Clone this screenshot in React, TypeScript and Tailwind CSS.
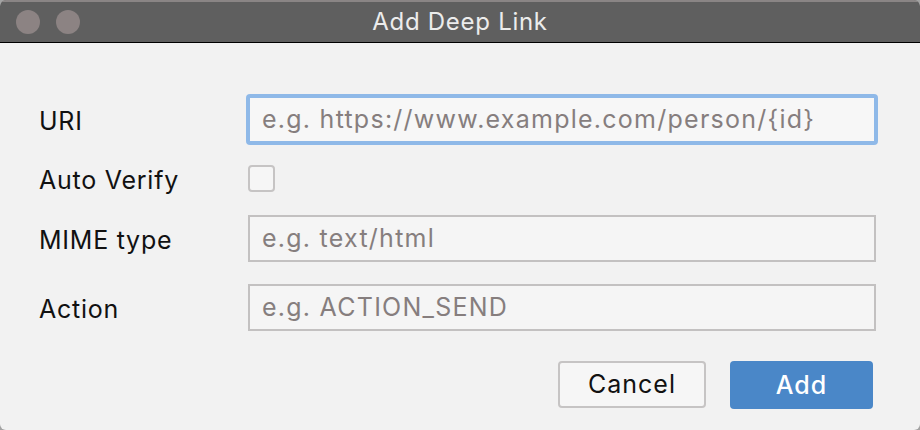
import React from 'react';

const font = { fontFamily: 'Inter, "Liberation Sans", sans-serif' };

function Field({ placeholder, focused }: { placeholder: string; focused?: boolean }) {
  return (
    <div
      className={
        focused
          ? 'h-[47px] w-[628px] rounded-[2px] border-2 border-[#8fb9e8] bg-[#f7f7f7] shadow-[0_0_0_2px_#8fb9e8] flex items-center px-[12px]'
          : 'h-[47px] w-[628px] border-2 border-[#c3c1c1] bg-[#f5f5f5] flex items-center px-[12px]'
      }
    >
      <span className="text-[25px] leading-none text-[#867e7e] tracking-[0.05em]">{placeholder}</span>
    </div>
  );
}

function Label({ children }: { children: React.ReactNode }) {
  return <span className="pt-[4px] text-[25px] leading-none text-[#111] tracking-[0.03em]">{children}</span>;
}

export default function App() {
  return (
    <div className="w-[920px] h-[430px] bg-[#a3a3a3]" style={font}>
      <div className="w-full h-full rounded-[6px] overflow-hidden bg-[#f2f2f2] flex flex-col">
        {/* title bar */}
        <div className="h-[43px] bg-[#5f5f5f] border-t-2 border-[#8a8585] border-b border-b-black relative flex items-center justify-center">
          <div className="absolute left-[16px] top-[8px] flex gap-[16px]">
            <div className="w-[24px] h-[24px] rounded-full bg-[#8c8383]" />
            <div className="w-[24px] h-[24px] rounded-full bg-[#8c8383]" />
          </div>
          <span className="text-[24px] text-[#ececec] tracking-[0.03em]">Add Deep Link</span>
        </div>

        {/* form */}
        <div className="pl-[39px] pr-[44px] pt-[53px] flex flex-col">
          <div className="grid grid-cols-[209px_628px] items-center">
            <Label>URI</Label>
            <Field placeholder="e.g. https://www.example.com/person/{id}" focused />
          </div>
          <div className="grid grid-cols-[209px_628px] items-center mt-[21px] h-[27px]">
            <Label>Auto Verify</Label>
            <div className="w-[27px] h-[27px] rounded-[4px] border-2 border-[#c6c4c4] bg-[#f6f6f6]" />
          </div>
          <div className="grid grid-cols-[209px_628px] items-center mt-[24px]">
            <Label>MIME type</Label>
            <Field placeholder="e.g. text/html" />
          </div>
          <div className="grid grid-cols-[209px_628px] items-center mt-[22px]">
            <Label>Action</Label>
            <Field placeholder="e.g. ACTION_SEND" />
          </div>

          <div className="flex justify-end gap-[24px] mt-[30px] pr-[3px]">
            <button className="w-[148px] h-[47px] rounded-[4px] border-2 border-[#c6c4c4] bg-[#f6f6f6] text-[25px] leading-none text-[#111] tracking-[0.04em]">
              Cancel
            </button>
            <button className="w-[143px] h-[48px] rounded-[4px] bg-[#4a87c8] text-[25px] leading-none text-white font-medium tracking-[0.04em]">
              Add
            </button>
          </div>
        </div>
      </div>
    </div>
  );
}
